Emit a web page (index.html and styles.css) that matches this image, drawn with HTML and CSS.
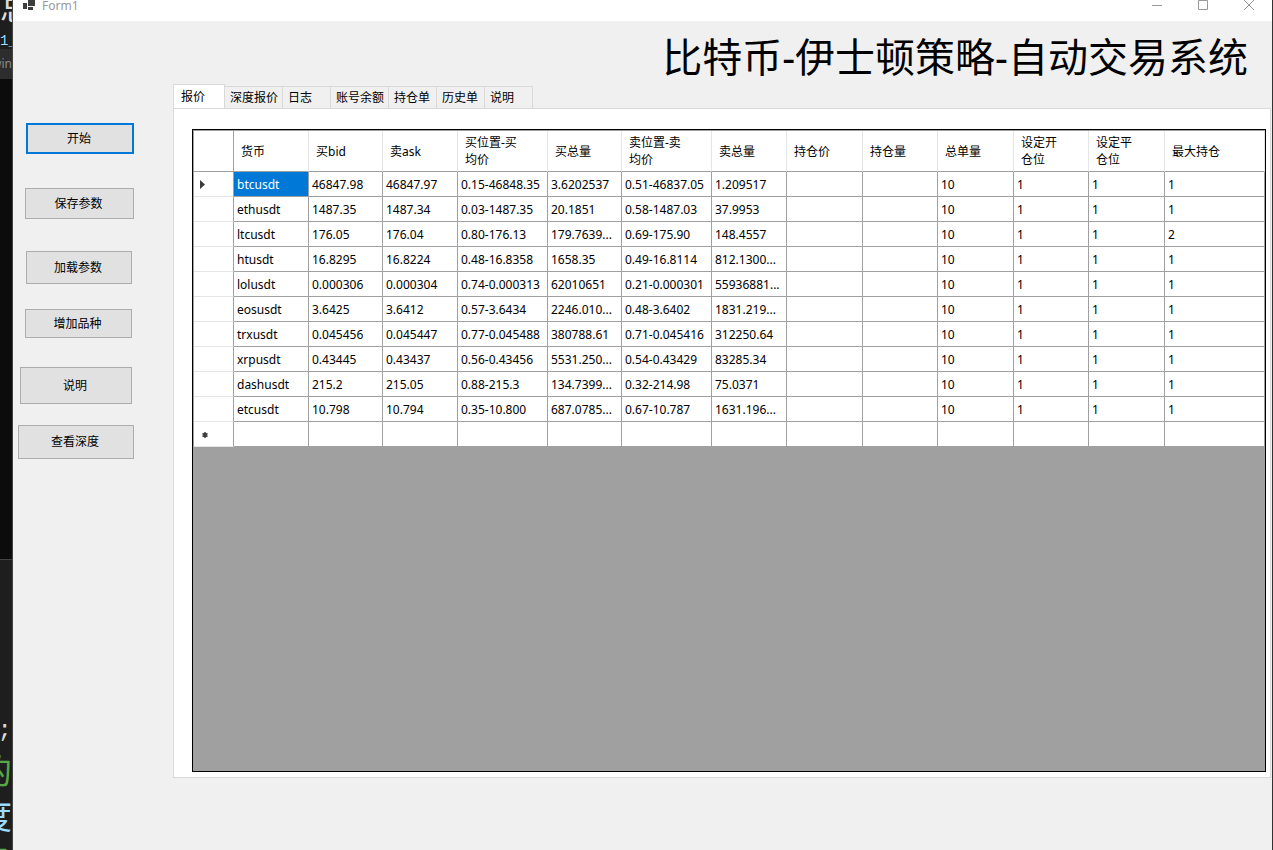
FILE: index.html
```html
<!DOCTYPE html>
<html lang="zh-CN">
<head>
	<meta charset="utf-8">
	<title>Form1</title>
	<link rel="stylesheet" href="styles.css">
</head>
<body>
	<div class="desktop">
		<!-- 窗口后面露出的编辑器 -->
		<div class="behind">
			<div class="code-top">
				<span class="c-white">总</span>
				<span class="code-small c-blue">1_</span>
			</div>
			<div class="console-title"><span>win</span></div>
			<div class="console"></div>
			<div class="code-bottom">
				<span class="c-white">;</span>
				<span class="c-green">的</span>
				<span class="c-blue">度</span>
				<span class="c-green">名</span>
			</div>
		</div>
		<div class="window">
			<div class="titlebar">
				<svg class="logo" width="14" height="14" viewBox="0 0 14 14">
					<path fill="#3c3c3c" d="M5 0h7v6H5zM0 3h4v6H0zM5 7h5v3H5z"/>
				</svg>
				<span class="caption">Form1</span>
				<button class="winbtn" aria-label="最小化">
					<svg width="12" height="12" viewBox="0 0 12 12"><path d="M1 5.500h10"/></svg>
				</button>
				<button class="winbtn" aria-label="最大化">
					<svg width="12" height="12" viewBox="0 0 12 12"><path d="M1.500 .5h9v9h-9z"/></svg>
				</button>
				<button class="winbtn" aria-label="关闭">
					<svg width="12" height="12" viewBox="0 0 12 12"><path d="M1 0l10 10M11 0L1 10"/></svg>
				</button>
			</div>
			<div class="client">
				<div class="side">
					<button class="btn start">开始</button>
					<button class="btn save">保存参数</button>
					<button class="btn load">加载参数</button>
					<button class="btn add">增加品种</button>
					<button class="btn help">说明</button>
					<button class="btn depth">查看深度</button>
				</div>
				<div class="main">
					<h1>比特币-伊士顿策略-自动交易系统</h1>
					<div class="tabs" role="tablist">
						<button class="tab active" role="tab" aria-selected="true">报价</button>
						<button class="tab" role="tab">深度报价</button>
						<button class="tab" role="tab">日志</button>
						<button class="tab" role="tab">账号余额</button>
						<button class="tab" role="tab">持仓单</button>
						<button class="tab" role="tab">历史单</button>
						<button class="tab" role="tab">说明</button>
					</div>
					<div class="page">
						<div class="grid">
							<table>
								<colgroup>
									<col class="w40"><col class="w75"><col class="w74"><col class="w75"><col class="w90"><col class="w74"><col class="w90">
									<col class="w75"><col class="w76"><col class="w75"><col class="w76"><col class="w75"><col class="w76"><col>
								</colgroup>
								<thead>
									<tr><th></th><th>货币</th><th>买bid</th><th>卖ask</th><th>买位置-买<br>均价</th><th>买总量</th><th>卖位置-卖<br>均价</th><th>卖总量</th><th>持仓价</th><th>持仓量</th><th>总单量</th><th>设定开<br>仓位</th><th>设定平<br>仓位</th><th>最大持仓</th></tr>
								</thead>
								<tbody>
									<tr><th><svg width="6" height="10" viewBox="0 0 6 10"><path fill="#3c3c3c" d="M0 1l5 4.500-5 4.500z"/></svg></th><td class="selected">btcusdt</td><td>46847.98</td><td>46847.97</td><td>0.15-46848.35</td><td>3.6202537</td><td>0.51-46837.05</td><td>1.209517</td><td></td><td></td><td>10</td><td>1</td><td>1</td><td>1</td></tr>
									<tr><th></th><td>ethusdt</td><td>1487.35</td><td>1487.34</td><td>0.03-1487.35</td><td>20.1851</td><td>0.58-1487.03</td><td>37.9953</td><td></td><td></td><td>10</td><td>1</td><td>1</td><td>1</td></tr>
									<tr><th></th><td>ltcusdt</td><td>176.05</td><td>176.04</td><td>0.80-176.13</td><td>179.7639...</td><td>0.69-175.90</td><td>148.4557</td><td></td><td></td><td>10</td><td>1</td><td>1</td><td>2</td></tr>
									<tr><th></th><td>htusdt</td><td>16.8295</td><td>16.8224</td><td>0.48-16.8358</td><td>1658.35</td><td>0.49-16.8114</td><td>812.1300...</td><td></td><td></td><td>10</td><td>1</td><td>1</td><td>1</td></tr>
									<tr><th></th><td>lolusdt</td><td>0.000306</td><td>0.000304</td><td>0.74-0.000313</td><td>62010651</td><td>0.21-0.000301</td><td>55936881...</td><td></td><td></td><td>10</td><td>1</td><td>1</td><td>1</td></tr>
									<tr><th></th><td>eosusdt</td><td>3.6425</td><td>3.6412</td><td>0.57-3.6434</td><td>2246.010...</td><td>0.48-3.6402</td><td>1831.219...</td><td></td><td></td><td>10</td><td>1</td><td>1</td><td>1</td></tr>
									<tr><th></th><td>trxusdt</td><td>0.045456</td><td>0.045447</td><td>0.77-0.045488</td><td>380788.61</td><td>0.71-0.045416</td><td>312250.64</td><td></td><td></td><td>10</td><td>1</td><td>1</td><td>1</td></tr>
									<tr><th></th><td>xrpusdt</td><td>0.43445</td><td>0.43437</td><td>0.56-0.43456</td><td>5531.250...</td><td>0.54-0.43429</td><td>83285.34</td><td></td><td></td><td>10</td><td>1</td><td>1</td><td>1</td></tr>
									<tr><th></th><td>dashusdt</td><td>215.2</td><td>215.05</td><td>0.88-215.3</td><td>134.7399...</td><td>0.32-214.98</td><td>75.0371</td><td></td><td></td><td>10</td><td>1</td><td>1</td><td>1</td></tr>
									<tr><th></th><td>etcusdt</td><td>10.798</td><td>10.794</td><td>0.35-10.800</td><td>687.0785...</td><td>0.67-10.787</td><td>1631.196...</td><td></td><td></td><td>10</td><td>1</td><td>1</td><td>1</td></tr>
									<tr><th><svg width="10" height="8" viewBox="0 0 10 8"><path stroke="#3c3c3c" stroke-width="1.5" d="M5 2v6M2.500 3.500l5 3M7.500 3.500l-5 3"/></svg></th><td></td><td></td><td></td><td></td><td></td><td></td><td></td><td></td><td></td><td></td><td></td><td></td><td></td></tr>
								</tbody>
							</table>
						</div>
					</div>
				</div>
			</div>
		</div>
	</div>
</body>
</html>
```
FILE: styles.css
```css
*{
	box-sizing: border-box;
	margin: 0;
	padding: 0;
}
body{
	font-family: "Noto Sans", "Noto Sans CJK SC", sans-serif;
	font-size: 12px;
	color: #000;
	background: #1e1e1e;
}
button{
	font: inherit;
	color: inherit;
}
.desktop{
	display: flex;
	height: 100vh;
	overflow: hidden;
}

/* 背景编辑器 */
.behind{
	display: flex;
	flex-direction: column;
	width: 13px;
	overflow: hidden;
	border-right: 1px solid #444;
}
.behind span{
	display: block;
	white-space: nowrap;
}
.code-top, .code-bottom{
	display: flex;
	flex-direction: column;
	flex-shrink: 0;
	font-family: "Liberation Mono", "Noto Sans CJK SC", monospace;
}
.code-top{
	height: 49px;
	justify-content: flex-end;
	font-size: 32px;
	line-height: 44px;
}
.code-top .code-small{
	font-size: 14px;
	line-height: 16px;
}
.console-title{
	display: flex;
	justify-content: flex-end;
	flex-shrink: 0;
	height: 30px;
	line-height: 30px;
	color: #888;
	background: #2d2d2d;
}
.console{
	flex-shrink: 0;
	height: 481px;
	background: #0c0c0c;
	border-bottom: 1px solid #444;
}
.code-bottom{
	height: 290px;
	padding-top: 148px;
	align-items: flex-end;
	font-size: 34px;
	line-height: 45px;
}
.code-bottom .c-white{
	font-size: 24px;
}
.c-white{
	color: #dcdcdc;
}
.c-blue{
	color: #9cdcfe;
}
.c-green{
	color: #57a64a;
}

.window{
	flex: 1;
	display: flex;
	flex-direction: column;
	min-width: 0;
	background: #f0f0f0;
	border-right: 1px solid #333;
}
.titlebar{
	display: flex;
	height: 21px;
	padding-left: 10px;
	background: #fff;
}
.caption{
	flex: 1;
	padding-left: 5px;
	line-height: 12px;
	color: #999;
}
.winbtn{
	width: 46px;
	height: 12px;
	border: none;
	background: none;
}
.winbtn svg{
	display: block;
	margin: 0 auto;
	fill: none;
	stroke: #999;
}
.client{
	flex: 1;
	display: flex;
}

.side{
	display: flex;
	flex-direction: column;
	align-items: flex-end;
	width: 160px;
	padding: 102px 39px 0 5px;
}
.btn{
	padding: 0 2px 2px 0;
	border: 1px solid #adadad;
	background: #e1e1e1;
}
.btn:hover{
	border-color: #0078d7;
	background: #e5f1fb;
}
.start{
	width: 108px;
	height: 31px;
	margin-bottom: 34px;
	border: 2px solid #0078d7;
}
.save{
	width: 109px;
	height: 31px;
	margin-bottom: 32px;
}
.load, .add, .help{
	margin-right: 2px;
}
.load{
	width: 106px;
	height: 33px;
	margin-bottom: 25px;
}
.add{
	width: 107px;
	height: 29px;
	margin-bottom: 29px;
}
.help{
	width: 112px;
	height: 37px;
	margin-bottom: 21px;
}
.depth{
	width: 116px;
	height: 34px;
}

.main{
	flex: 1;
	display: flex;
	flex-direction: column;
	min-width: 0;
	padding: 7px 1px 72px 0;
}
h1{
	padding-right: 23px;
	font-size: 40px;
	font-weight: normal;
	line-height: 56px;
	height: 56px;
	margin-bottom: 0;
	padding-top: 1px;
	text-align: right;
	white-space: nowrap;
}
.tabs{
	display: flex;
	align-items: flex-end;
	height: 24px;
}
.tab{
	min-width: 48px;
	height: 22px;
	padding: 0 4px 1px 5px;
	border: 1px solid #d9d9d9;
	border-width: 1px 1px 0 0;
	background: #f0f0f0;
	text-align: left;
}
.tab.active{
	width: 52px;
	height: 25px;
	margin-bottom: -1px;
	padding: 0 7px 2px;
	border-left-width: 1px;
	background: #fff;
}
.page{
	flex: 1;
	padding: 20px 4px 5px 18px;
	border: 1px solid #d9d9d9;
	background: #fff;
}
.grid{
	height: 100%;
	padding: 1px 0 0 1px;
	border: 1px solid #000;
	background: #a0a0a0;
}
table{
	width: 100%;
	table-layout: fixed;
	border-spacing: 0;
	background: #fff;
}
th, td{
	height: 25px;
	padding: 0 0 0 3px;
	border: 0 solid #a0a0a0;
	border-width: 0 1px 1px 0;
	font-weight: normal;
	line-height: 17px;
	text-align: left;
	white-space: nowrap;
	overflow: hidden;
}
thead th{
	height: 41px;
	padding-left: 7px;
	border-right-color: #e5e5e5;
}
thead th:first-child{
	border-right-color: #a0a0a0;
}
tbody th{
	padding-left: 6px;
	border-bottom-color: #e5e5e5;
}
tbody th svg{
	display: block;
}
.selected{
	color: #fff;
	background: #0078d7;
}
.w40{ width: 40px; }
.w74{ width: 74px; }
.w75{ width: 75px; }
.w76{ width: 76px; }
.w90{ width: 90px; }
```
